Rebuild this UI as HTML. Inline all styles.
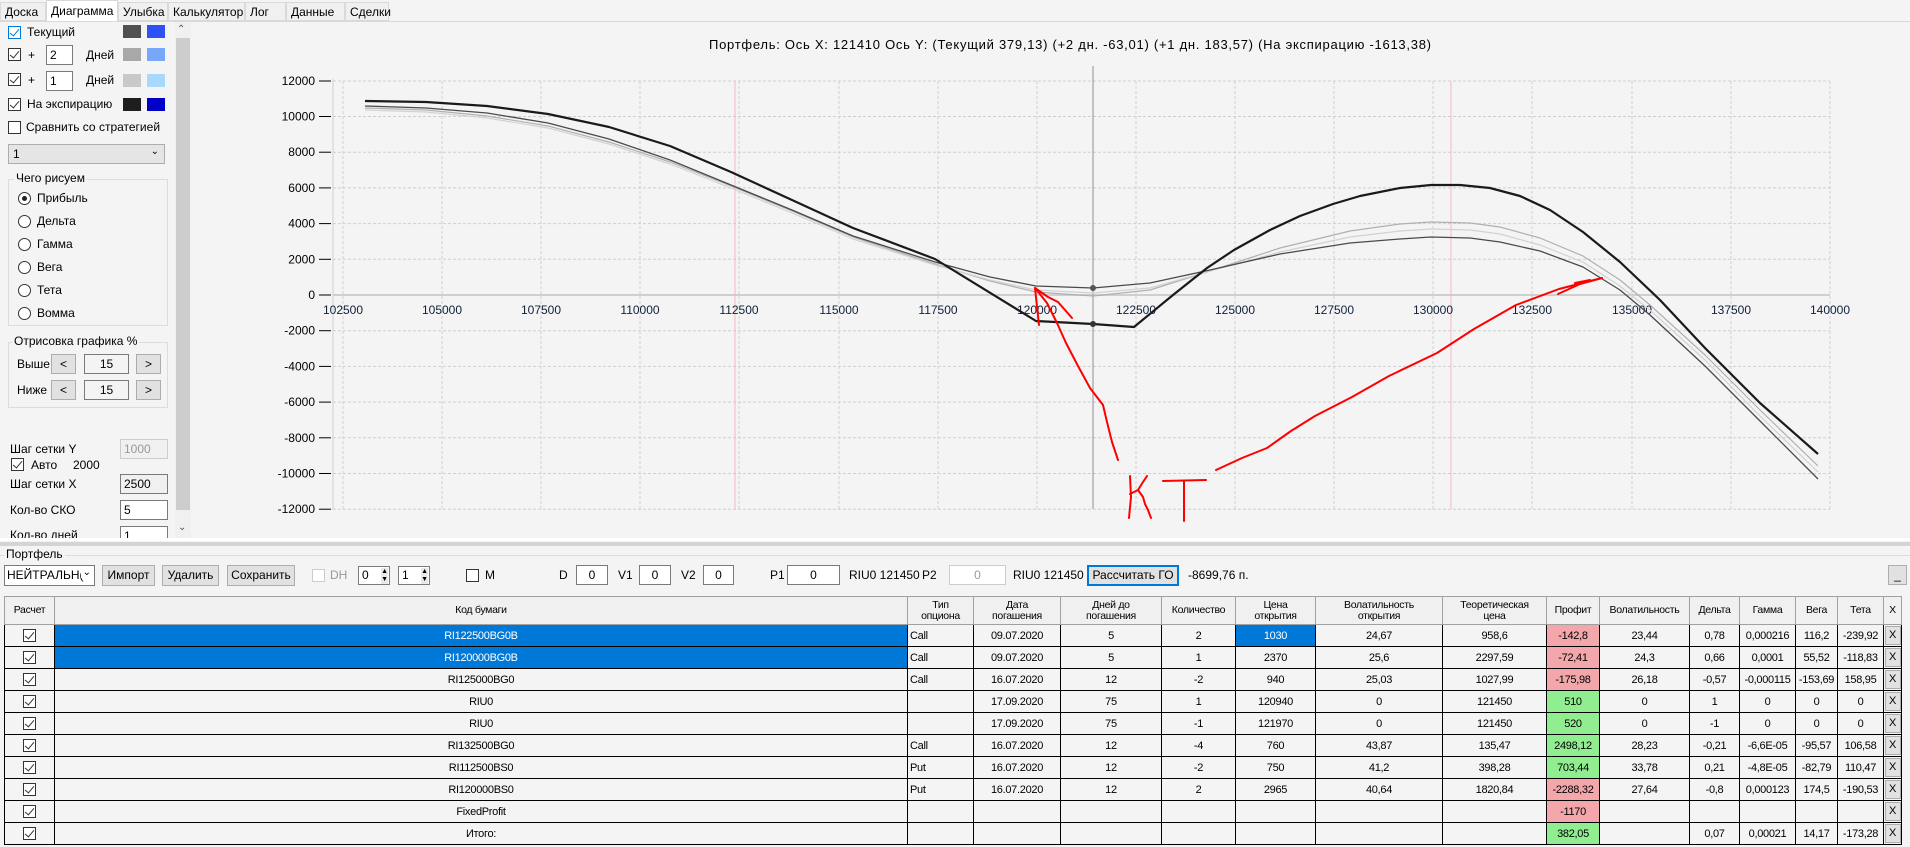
<!DOCTYPE html>
<html><head><meta charset="utf-8">
<style>
*{box-sizing:border-box;margin:0;padding:0}
body{width:1910px;height:847px;overflow:hidden;background:#f4f4f4;font-family:"Liberation Sans",sans-serif;font-size:12px;color:#000;position:relative}
.a{position:absolute;white-space:nowrap}
.tab{position:absolute;top:2px;height:19px;border:1px solid #d9d9d9;background:#f0f0f0;font-size:12px;padding:2px 4px;line-height:14px}
.cb{position:absolute;width:13px;height:13px;border:1px solid #333;background:#fff}
.cb.k::after{content:"";position:absolute;left:3px;top:0px;width:4px;height:8px;border:solid #333;border-width:0 1.3px 1.3px 0;transform:rotate(40deg)}
.cb.blue{border-color:#0078d7}.cb.blue::after{border-color:#0078d7}
.sw{position:absolute;width:18px;height:13px}
.tb{position:absolute;background:#fff;border:1px solid #7a7a7a;height:20px;padding:2px 3px;font-size:12px}
.btn{position:absolute;background:#e1e1e1;border:1px solid #adadad;text-align:center;font-size:12px;line-height:18px;height:20px}
.rd{position:absolute;width:13px;height:13px;border:1px solid #333;border-radius:50%;background:#fff}
.gb{position:absolute;border:1px solid #dcdcdc}
.gbl{position:absolute;background:#f4f4f4;padding:0 2px;font-size:12px}
table{position:absolute;left:4px;top:596px;border-collapse:collapse;font-size:11px;letter-spacing:-0.3px}
td,th{border:1px solid #000;text-align:center;height:22px;padding:0 2px;background:#f4f4f4;font-weight:normal;white-space:nowrap}
th{height:28px;background:#f0f0f0;border-color:#a0a0a0;line-height:11px;font-size:10.5px}
td.s{background:#0078d7;color:#fff}
td.r{background:#f4a7aa}
td.g{background:#90ee90}
td.l{text-align:left}
.ck{display:inline-block;width:13px;height:13px;border:1px solid #333;position:relative;vertical-align:middle;background:#fff}
.ck::after{content:"";position:absolute;left:3px;top:0;width:4px;height:8px;border:solid #333;border-width:0 1.2px 1.2px 0;transform:rotate(40deg)}
.x{display:inline-block;width:16px;height:19px;background:#e1e1e1;border:1px solid #adadad;line-height:17px;vertical-align:middle}
.tl{position:absolute;top:568px;white-space:nowrap;font-size:12px}
</style></head><body>

<!-- tabs -->
<div class="tab" style="left:0;width:46px">Доска</div>
<div class="tab" style="left:46px;width:72px;top:0;height:22px;background:#fff;border-bottom:none;padding-top:3px">Диаграмма</div>
<div class="tab" style="left:118px;width:50px">Улыбка</div>
<div class="tab" style="left:168px;width:77px">Калькулятор</div>
<div class="tab" style="left:245px;width:41px">Лог</div>
<div class="tab" style="left:286px;width:59px">Данные</div>
<div class="tab" style="left:345px;width:44px">Сделки</div>
<div class="a" style="left:0;top:21px;width:1910px;height:1px;background:#d9d9d9"></div>
<div class="a" style="left:1px;top:22px;width:1907px;height:517px;background:#f4f4f4"></div>

<!-- left panel -->
<div class="cb k blue" style="left:8px;top:26px"></div><div class="a" style="left:27px;top:25px">Текущий</div>
<div class="sw" style="left:123px;top:25px;background:#505050"></div><div class="sw" style="left:147px;top:25px;background:#2a52f7"></div>
<div class="cb k" style="left:8px;top:48px"></div><div class="a" style="left:28px;top:48px">+</div>
<div class="tb" style="left:46px;top:45px;width:27px">2</div><div class="a" style="left:86px;top:48px">Дней</div>
<div class="sw" style="left:123px;top:48px;background:#a8a8a8"></div><div class="sw" style="left:147px;top:48px;background:#78a6f8"></div>
<div class="cb k" style="left:8px;top:73px"></div><div class="a" style="left:28px;top:73px">+</div>
<div class="tb" style="left:46px;top:71px;width:27px">1</div><div class="a" style="left:86px;top:73px">Дней</div>
<div class="sw" style="left:123px;top:74px;background:#c8c8c8"></div><div class="sw" style="left:147px;top:74px;background:#a8d8fc"></div>
<div class="cb k" style="left:8px;top:98px"></div><div class="a" style="left:27px;top:97px">На экспирацию</div>
<div class="sw" style="left:123px;top:98px;background:#1e1e1e"></div><div class="sw" style="left:147px;top:98px;background:#0000c8"></div>
<div class="cb" style="left:8px;top:121px"></div><div class="a" style="left:26px;top:120px">Сравнить со стратегией</div>
<div class="a" style="left:8px;top:144px;width:157px;height:20px;background:#e5e5e5;border:1px solid #adadad;padding:2px 4px">1<span style="position:absolute;right:5px;top:1px;font-size:10px">&#8964;</span></div>

<div class="gb" style="left:8px;top:179px;width:160px;height:147px"></div>
<div class="gbl" style="left:14px;top:171px">Чего рисуем</div>
<div class="rd" style="left:18px;top:192px"><div style="position:absolute;left:3px;top:3px;width:5px;height:5px;border-radius:50%;background:#222"></div></div><div class="a" style="left:37px;top:191px">Прибыль</div>
<div class="rd" style="left:18px;top:215px"></div><div class="a" style="left:37px;top:214px">Дельта</div>
<div class="rd" style="left:18px;top:238px"></div><div class="a" style="left:37px;top:237px">Гамма</div>
<div class="rd" style="left:18px;top:261px"></div><div class="a" style="left:37px;top:260px">Вега</div>
<div class="rd" style="left:18px;top:284px"></div><div class="a" style="left:37px;top:283px">Тета</div>
<div class="rd" style="left:18px;top:307px"></div><div class="a" style="left:37px;top:306px">Вомма</div>
<div class="gb" style="left:8px;top:342px;width:160px;height:66px"></div>
<div class="gbl" style="left:12px;top:334px">Отрисовка графика %</div>
<div class="a" style="left:17px;top:357px">Выше</div>
<div class="btn" style="left:51px;top:354px;width:25px">&lt;</div>
<div class="a" style="left:84px;top:354px;width:45px;height:20px;border:1px solid #7a7a7a;text-align:center;line-height:18px">15</div>
<div class="btn" style="left:136px;top:354px;width:25px">&gt;</div>
<div class="a" style="left:17px;top:383px">Ниже</div>
<div class="btn" style="left:51px;top:380px;width:25px">&lt;</div>
<div class="a" style="left:84px;top:380px;width:45px;height:20px;border:1px solid #7a7a7a;text-align:center;line-height:18px">15</div>
<div class="btn" style="left:136px;top:380px;width:25px">&gt;</div>
<div class="a" style="left:10px;top:442px">Шаг сетки Y</div>
<div class="tb" style="left:120px;top:439px;width:48px;background:#f0f0f0;color:#999;border-color:#ccc">1000</div>
<div class="cb k" style="left:11px;top:458px"></div><div class="a" style="left:31px;top:458px">Авто</div><div class="a" style="left:73px;top:458px">2000</div>
<div class="a" style="left:10px;top:477px">Шаг сетки X</div>
<div class="tb" style="left:120px;top:474px;width:48px;background:#f0f0f0">2500</div>
<div class="a" style="left:10px;top:503px">Кол-во СКО</div>
<div class="tb" style="left:120px;top:500px;width:48px">5</div>
<div style="position:absolute;left:0;top:522px;width:175px;height:16px;overflow:hidden"><div class="a" style="left:10px;top:6px">Кол-во дней</div><div class="tb" style="left:120px;top:4px;width:48px">1</div></div>
<!-- scrollbar -->
<div class="a" style="left:175px;top:22px;width:16px;height:516px;background:#f0f0f0"></div>
<div class="a" style="left:177px;top:24px;font-size:10px;color:#555">&#8963;</div>
<div class="a" style="left:176px;top:38px;width:14px;height:472px;background:#cdcdcd"></div>
<div class="a" style="left:178px;top:522px;font-size:10px;color:#555">&#8964;</div>

<!-- chart -->
<svg class="a" style="left:0;top:0" width="1910" height="540" viewBox="0 0 1910 540" font-family="Liberation Sans, sans-serif" font-size="12">
<text x="709" y="49" font-size="13" textLength="722" lengthAdjust="spacing">Портфель: Ось X: 121410 Ось Y:  (Текущий 379,13)  (+2 дн. -63,01)  (+1 дн. 183,57)  (На экспирацию -1613,38)</text>
<g stroke="#cfcfcf" stroke-width="1" stroke-dasharray="3,2">
<line x1="333" y1="81" x2="1830" y2="81"/><line x1="333" y1="116.5" x2="1830" y2="116.5"/><line x1="333" y1="152.2" x2="1830" y2="152.2"/><line x1="333" y1="187.9" x2="1830" y2="187.9"/><line x1="333" y1="223.6" x2="1830" y2="223.6"/><line x1="333" y1="259.3" x2="1830" y2="259.3"/><line x1="333" y1="330.7" x2="1830" y2="330.7"/><line x1="333" y1="366.4" x2="1830" y2="366.4"/><line x1="333" y1="402.1" x2="1830" y2="402.1"/><line x1="333" y1="437.8" x2="1830" y2="437.8"/><line x1="333" y1="473.5" x2="1830" y2="473.5"/><line x1="333" y1="509.2" x2="1830" y2="509.2"/>
<line x1="343" y1="81" x2="343" y2="509"/><line x1="442" y1="81" x2="442" y2="509"/><line x1="541" y1="81" x2="541" y2="509"/><line x1="640" y1="81" x2="640" y2="509"/><line x1="739" y1="81" x2="739" y2="509"/><line x1="839" y1="81" x2="839" y2="509"/><line x1="938" y1="81" x2="938" y2="509"/><line x1="1037" y1="81" x2="1037" y2="509"/><line x1="1136" y1="81" x2="1136" y2="509"/><line x1="1235" y1="81" x2="1235" y2="509"/><line x1="1334" y1="81" x2="1334" y2="509"/><line x1="1433" y1="81" x2="1433" y2="509"/><line x1="1532" y1="81" x2="1532" y2="509"/><line x1="1632" y1="81" x2="1632" y2="509"/><line x1="1731" y1="81" x2="1731" y2="509"/><line x1="1830" y1="81" x2="1830" y2="509"/>
</g>
<line x1="333" y1="79" x2="333" y2="510" stroke="#d0d0d0"/>
<line x1="333" y1="295" x2="1830" y2="295" stroke="#cfcfcf" stroke-width="2"/>
<line x1="735" y1="81" x2="735" y2="509" stroke="#f5b9c2"/>
<line x1="1451" y1="81" x2="1451" y2="509" stroke="#f5b9c2"/>
<line x1="1093" y1="66" x2="1093" y2="509" stroke="#8c919b"/>
<g text-anchor="end">
<text x="315" y="85">12000</text><text x="315" y="120.5">10000</text><text x="315" y="156.2">8000</text><text x="315" y="191.9">6000</text><text x="315" y="227.6">4000</text><text x="315" y="263.3">2000</text><text x="315" y="299">0</text><text x="315" y="334.7">-2000</text><text x="315" y="370.4">-4000</text><text x="315" y="406.1">-6000</text><text x="315" y="441.8">-8000</text><text x="315" y="477.5">-10000</text><text x="315" y="513.2">-12000</text>
</g>
<g stroke="#000"><line x1="319" y1="81" x2="331" y2="81"/><line x1="319" y1="116.5" x2="331" y2="116.5"/><line x1="319" y1="152.2" x2="331" y2="152.2"/><line x1="319" y1="187.9" x2="331" y2="187.9"/><line x1="319" y1="223.6" x2="331" y2="223.6"/><line x1="319" y1="259.3" x2="331" y2="259.3"/><line x1="319" y1="295" x2="331" y2="295"/><line x1="319" y1="330.7" x2="331" y2="330.7"/><line x1="319" y1="366.4" x2="331" y2="366.4"/><line x1="319" y1="402.1" x2="331" y2="402.1"/><line x1="319" y1="437.8" x2="331" y2="437.8"/><line x1="319" y1="473.5" x2="331" y2="473.5"/><line x1="319" y1="509.2" x2="331" y2="509.2"/></g>
<g text-anchor="middle" fill="#10203a">
<text x="343" y="314">102500</text><text x="442" y="314">105000</text><text x="541" y="314">107500</text><text x="640" y="314">110000</text><text x="739" y="314">112500</text><text x="839" y="314">115000</text><text x="938" y="314">117500</text><text x="1037" y="314">120000</text><text x="1136" y="314">122500</text><text x="1235" y="314">125000</text><text x="1334" y="314">127500</text><text x="1433" y="314">130000</text><text x="1532" y="314">132500</text><text x="1632" y="314">135000</text><text x="1731" y="314">137500</text><text x="1830" y="314">140000</text>
</g>
<g fill="none" stroke-linejoin="round">
<polyline stroke="#b0b0b0" stroke-width="1.2" points="365,108 426,110 487,116 548,126 609,142 670,162 731,186 792,211 853,237 935,264 990,281 1036,292 1093,296 1150,290 1210,271 1280,248 1350,231 1400,224 1431,222 1470,223 1500,227 1540,238 1583,256 1620,280 1650,305 1705,355 1760,410 1818,466"/>
<polyline stroke="#d2d2d2" stroke-width="1.2" points="365,110 426,112 487,118 548,128 609,144 670,164 731,188 792,213 853,239 935,265 990,280 1036,290 1093,293 1150,288 1210,271 1280,252 1350,237 1400,231 1431,229 1470,230 1500,234 1540,245 1583,262 1620,286 1650,310 1705,360 1760,416 1818,472"/>
<polyline stroke="#4a4a4a" stroke-width="1.3" points="365,106 426,108 487,113 548,123 609,139 670,160 731,185 792,210 853,236 935,262 990,277 1036,286 1093,288 1150,283 1210,270 1280,254 1350,243 1400,239 1431,237 1470,238 1500,242 1540,251 1583,267 1620,290 1650,315 1705,366 1760,421 1818,479"/>
<polyline stroke="#1a1a1a" stroke-width="2.2" points="365,101 426,102 487,106 548,114 609,127 670,146 731,172 792,200 853,228 935,259 1036,321 1093,324 1134,327 1173,295 1207,268 1234,250 1270,230 1300,216 1333,204 1360,196 1400,188 1431,185 1460,185 1490,188 1520,196 1550,210 1583,232 1620,262 1660,300 1705,348 1760,403 1818,454"/>
</g>
<circle cx="1093" cy="288" r="3" fill="#555"/>
<circle cx="1093" cy="324" r="3" fill="#333"/>
<g fill="none" stroke="#ff0000" stroke-width="2" stroke-linecap="round" stroke-linejoin="round">
<polyline points="1118,460 1112,442 1107,422 1103,405 1090,388 1078,366 1066,343 1057,323 1047,303 1035,288"/>
<polyline points="1035,288 1039,325"/>
<polyline points="1035,288 1048,297 1058,302 1072,318"/>
<polyline points="1130,476 1131,497 1129,518"/>
<polyline points="1130,494 1138,490 1143,482 1147,476"/>
<polyline points="1138,490 1143,497 1145,504 1148,510 1151,518"/>
<polyline points="1163,481 1206,480"/>
<polyline points="1184,481 1184,521"/>
<polyline points="1216,470 1242,458 1267,448 1291,431 1315,416 1352,397 1389,376 1437,353 1474,329 1516,305 1559,289 1602,278"/>
<polyline points="1558,294 1580,284 1602,278"/>
<polyline points="1575,283 1590,280"/>
</g>
</svg>

<!-- splitter -->
<div class="a" style="left:0;top:538px;width:1910px;height:3px;background:#fff"></div>
<div class="a" style="left:0;top:542px;width:1910px;height:4px;background:#d4d4d4"></div>
<div class="a" style="left:0;top:555px;width:1910px;height:1px;background:#dcdcdc"></div>
<div class="gbl" style="left:4px;top:547px">Портфель</div>

<!-- toolbar -->
<div class="a" style="left:4px;top:565px;width:91px;height:21px;background:#fff;border:1px solid #7a7a7a;padding:2px 2px;overflow:hidden">НЕЙТРАЛЬН(<span style="position:absolute;right:3px;top:1px;font-size:10px;background:#fff;padding-left:2px">&#8964;</span></div>
<div class="btn" style="left:102px;top:565px;width:53px;height:21px">Импорт</div>
<div class="btn" style="left:162px;top:565px;width:57px;height:21px">Удалить</div>
<div class="btn" style="left:227px;top:565px;width:68px;height:21px">Сохранить</div>
<div class="cb" style="left:312px;top:569px;border-color:#ccc"></div><div class="tl" style="left:330px;color:#999">DH</div>
<div class="a" style="left:358px;top:566px;width:32px;height:19px;background:#fff;border:1px solid #7a7a7a;padding:1px 3px">0<span style="position:absolute;right:1px;top:1px;font-size:7px;line-height:8px;background:#e8e8e8">▲<br>▼</span></div>
<div class="a" style="left:398px;top:566px;width:32px;height:19px;background:#fff;border:1px solid #7a7a7a;padding:1px 3px">1<span style="position:absolute;right:1px;top:1px;font-size:7px;line-height:8px;background:#e8e8e8">▲<br>▼</span></div>
<div class="cb" style="left:466px;top:569px"></div><div class="tl" style="left:485px">M</div>
<div class="tl" style="left:559px">D</div><div class="tb" style="left:576px;top:565px;width:32px;text-align:center">0</div>
<div class="tl" style="left:618px">V1</div><div class="tb" style="left:639px;top:565px;width:32px;text-align:center">0</div>
<div class="tl" style="left:681px">V2</div><div class="tb" style="left:703px;top:565px;width:31px;text-align:center">0</div>
<div class="tl" style="left:770px">P1</div><div class="tb" style="left:787px;top:565px;width:53px;text-align:center">0</div>
<div class="tl" style="left:849px">RIU0 121450</div>
<div class="tl" style="left:922px">P2</div><div class="tb" style="left:949px;top:565px;width:57px;text-align:center;color:#999;border-color:#ccc">0</div>
<div class="tl" style="left:1013px">RIU0 121450</div>
<div class="btn" style="left:1087px;top:565px;width:92px;height:21px;border:2px solid #0078d7;line-height:17px">Рассчитать ГО</div>
<div class="tl" style="left:1188px">-8699,76 п.</div>
<div class="btn" style="left:1888px;top:565px;width:19px">_</div>

<!-- table -->
<table>
<tr><th style="width:50px">Расчет</th><th style="width:853px">Код бумаги</th><th style="width:66px">Тип<br>опциона</th><th style="width:87px">Дата<br>погашения</th><th style="width:101px">Дней до<br>погашения</th><th style="width:74px">Количество</th><th style="width:80px">Цена<br>открытия</th><th style="width:127px">Волатильность<br>открытия</th><th style="width:104px">Теоретическая<br>цена</th><th style="width:53px">Профит</th><th style="width:90px">Волатильность</th><th style="width:50px">Дельта</th><th style="width:56px">Гамма</th><th style="width:42px">Вега</th><th style="width:46px">Тета</th><th style="width:18px">X</th></tr>
<tr><td><span class="ck"></span></td><td class="s">RI122500BG0B</td><td class="l">Call</td><td>09.07.2020</td><td>5</td><td>2</td><td class="s">1030</td><td>24,67</td><td>958,6</td><td class="r">-142,8</td><td>23,44</td><td>0,78</td><td>0,000216</td><td>116,2</td><td>-239,92</td><td style="padding:0"><span class="x">X</span></td></tr>
<tr><td><span class="ck"></span></td><td class="s">RI120000BG0B</td><td class="l">Call</td><td>09.07.2020</td><td>5</td><td>1</td><td>2370</td><td>25,6</td><td>2297,59</td><td class="r">-72,41</td><td>24,3</td><td>0,66</td><td>0,0001</td><td>55,52</td><td>-118,83</td><td style="padding:0"><span class="x">X</span></td></tr>
<tr><td><span class="ck"></span></td><td>RI125000BG0</td><td class="l">Call</td><td>16.07.2020</td><td>12</td><td>-2</td><td>940</td><td>25,03</td><td>1027,99</td><td class="r">-175,98</td><td>26,18</td><td>-0,57</td><td>-0,000115</td><td>-153,69</td><td>158,95</td><td style="padding:0"><span class="x">X</span></td></tr>
<tr><td><span class="ck"></span></td><td>RIU0</td><td></td><td>17.09.2020</td><td>75</td><td>1</td><td>120940</td><td>0</td><td>121450</td><td class="g">510</td><td>0</td><td>1</td><td>0</td><td>0</td><td>0</td><td style="padding:0"><span class="x">X</span></td></tr>
<tr><td><span class="ck"></span></td><td>RIU0</td><td></td><td>17.09.2020</td><td>75</td><td>-1</td><td>121970</td><td>0</td><td>121450</td><td class="g">520</td><td>0</td><td>-1</td><td>0</td><td>0</td><td>0</td><td style="padding:0"><span class="x">X</span></td></tr>
<tr><td><span class="ck"></span></td><td>RI132500BG0</td><td class="l">Call</td><td>16.07.2020</td><td>12</td><td>-4</td><td>760</td><td>43,87</td><td>135,47</td><td class="g">2498,12</td><td>28,23</td><td>-0,21</td><td>-6,6E-05</td><td>-95,57</td><td>106,58</td><td style="padding:0"><span class="x">X</span></td></tr>
<tr><td><span class="ck"></span></td><td>RI112500BS0</td><td class="l">Put</td><td>16.07.2020</td><td>12</td><td>-2</td><td>750</td><td>41,2</td><td>398,28</td><td class="g">703,44</td><td>33,78</td><td>0,21</td><td>-4,8E-05</td><td>-82,79</td><td>110,47</td><td style="padding:0"><span class="x">X</span></td></tr>
<tr><td><span class="ck"></span></td><td>RI120000BS0</td><td class="l">Put</td><td>16.07.2020</td><td>12</td><td>2</td><td>2965</td><td>40,64</td><td>1820,84</td><td class="r">-2288,32</td><td>27,64</td><td>-0,8</td><td>0,000123</td><td>174,5</td><td>-190,53</td><td style="padding:0"><span class="x">X</span></td></tr>
<tr><td><span class="ck"></span></td><td>FixedProfit</td><td></td><td></td><td></td><td></td><td></td><td></td><td></td><td class="r">-1170</td><td></td><td></td><td></td><td></td><td></td><td style="padding:0"><span class="x">X</span></td></tr>
<tr><td><span class="ck"></span></td><td>Итого:</td><td></td><td></td><td></td><td></td><td></td><td></td><td></td><td class="g">382,05</td><td></td><td>0,07</td><td>0,00021</td><td>14,17</td><td>-173,28</td><td style="padding:0"><span class="x">X</span></td></tr>
</table>
</body></html>
